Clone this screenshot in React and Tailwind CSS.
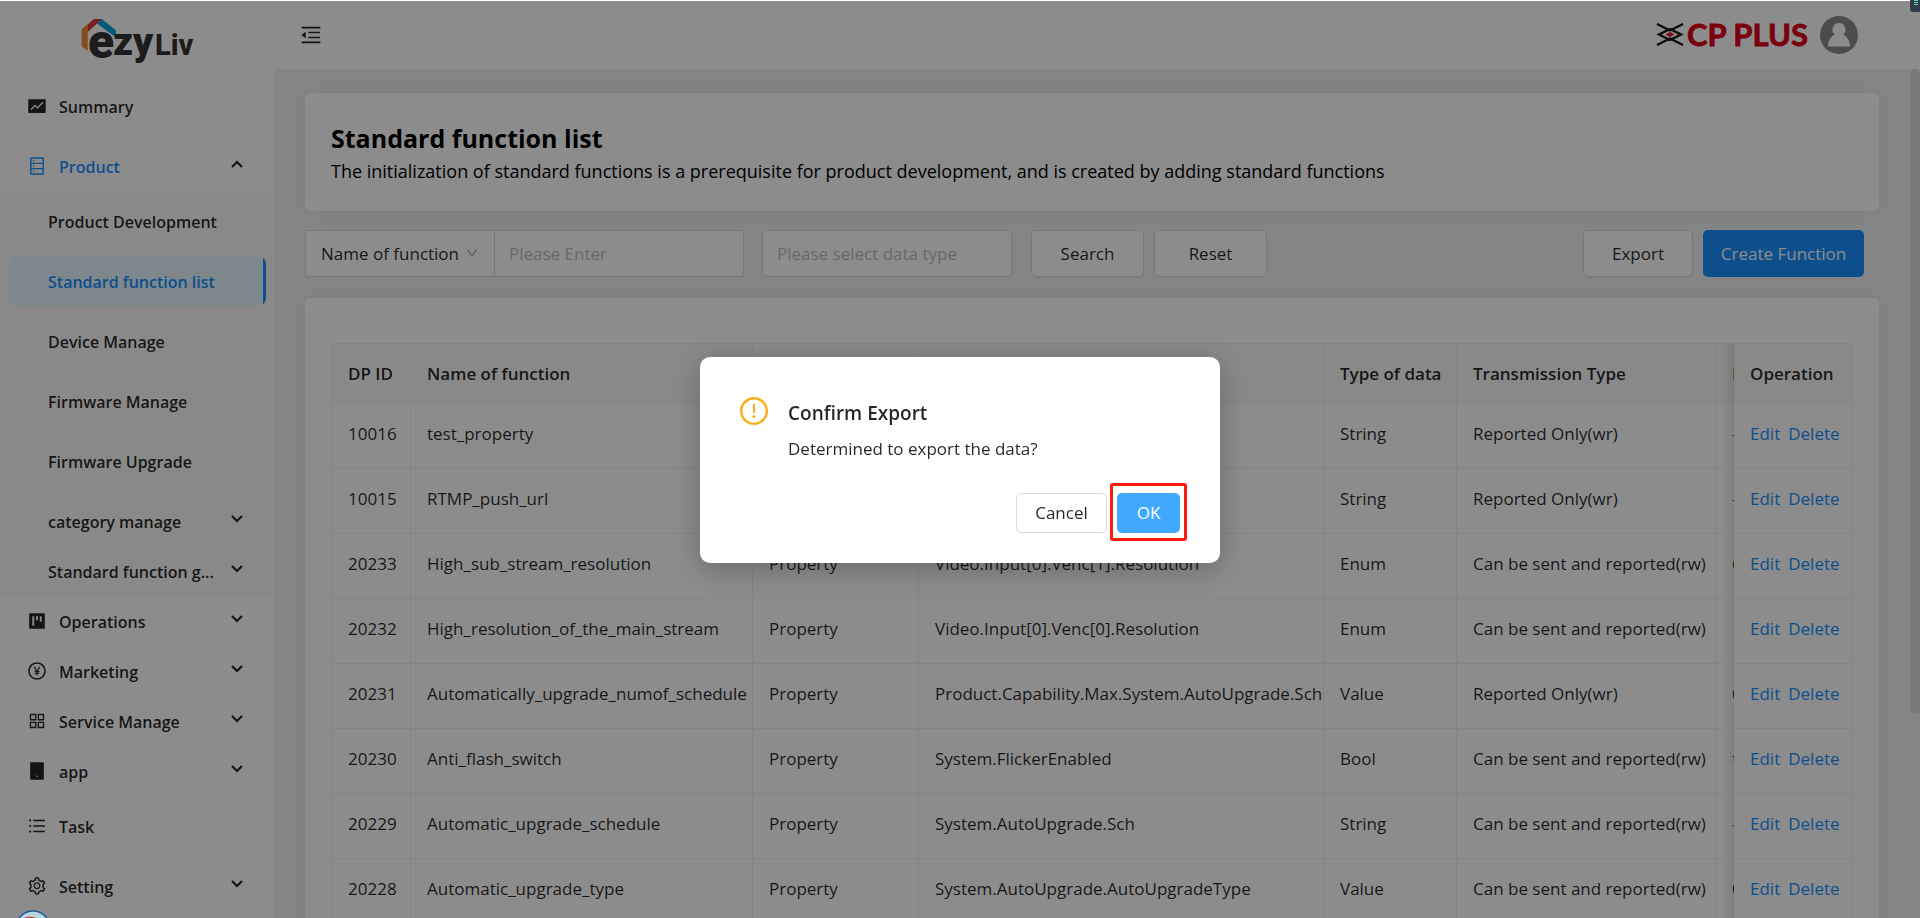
import {
  AiFillFund, AiOutlineDatabase, AiFillProject, AiOutlinePayCircle, AiOutlineAppstore, AiFillTablet,
  AiOutlineUnorderedList, AiOutlineSetting, AiOutlineMenuFold, AiOutlineExclamationCircle, AiOutlineDown,
} from "react-icons/ai";

const productItems = [
  { label: "Product Development" },
  { label: "Standard function list", active: true },
  { label: "Device Manage" },
  { label: "Firmware Manage" },
  { label: "Firmware Upgrade" },
];

const productGroups = ["category manage", "Standard function g..."];

const groups = [
  { label: "Operations", Icon: AiFillProject },
  { label: "Marketing", Icon: AiOutlinePayCircle },
  { label: "Service Manage", Icon: AiOutlineAppstore },
  { label: "app", Icon: AiFillTablet },
];

const rows = [
  ["10016", "test_property", "Property", "test_property", "String", "Reported Only(wr)", "-"],
  ["10015", "RTMP_push_url", "Property", "RTMP_push_url", "String", "Reported Only(wr)", "-"],
  ["20233", "High_sub_stream_resolution", "Property", "Video.Input[0].Venc[1].Resolution", "Enum", "Can be sent and reported(rw)", "6"],
  ["20232", "High_resolution_of_the_main_stream", "Property", "Video.Input[0].Venc[0].Resolution", "Enum", "Can be sent and reported(rw)", "1"],
  ["20231", "Automatically_upgrade_numof_schedule", "Property", "Product.Capability.Max.System.AutoUpgrade.Sch", "Value", "Reported Only(wr)", "0"],
  ["20230", "Anti_flash_switch", "Property", "System.FlickerEnabled", "Bool", "Can be sent and reported(rw)", "f"],
  ["20229", "Automatic_upgrade_schedule", "Property", "System.AutoUpgrade.Sch", "String", "Can be sent and reported(rw)", "-"],
  ["20228", "Automatic_upgrade_type", "Property", "System.AutoUpgrade.AutoUpgradeType", "Value", "Can be sent and reported(rw)", "0"],
];

function Chevron({ up }) {
  return (
    <svg viewBox="0 0 12 8" className="mb-1 h-2 w-3 shrink-0" fill="none" stroke="currentColor" strokeWidth="2.2">
      <path d={up ? "M1 7 6 2l5 5" : "M1 1l5 5 5-5"} />
    </svg>
  );
}

function MenuGroup({ label, Icon, open, nested }) {
  return (
    <button
      type="button"
      aria-expanded={!!open}
      className={`flex h-[50px] w-full items-center pr-[31px] text-left ${nested ? "pl-12" : "pl-[27px]"} ${open ? "text-[#1890ff]" : ""}`}
    >
      {Icon && <Icon className="mr-3 size-5 shrink-0" />}
      <span className="grow pt-0.5 whitespace-nowrap">{label}</span>
      <span className="text-black/85"><Chevron up={open} /></span>
    </button>
  );
}

function EzyLogo() {
  return (
    <svg viewBox="0 0 120 52" className="h-[52px] w-[120px]" role="img" aria-label="ezyLiv">
      <path d="M4.700 12l6-5v27l-6-4.500z" fill="#f08a33" />
      <path d="M10.700 7.500 17 2h8L10.700 15z" fill="#e0353d" />
      <path d="M20 6.500 25 2l14 11.500v7z" fill="#08a5dd" />
      <g fill="#333" fontFamily="Roboto, 'Open Sans', sans-serif" fontWeight="900">
        <text x="11" y="41" fontSize="48">e</text>
        <text x="36" y="38" fontSize="39">zy</text>
        <text x="78" y="38" fontSize="29" fontWeight="800">Liv</text>
      </g>
    </svg>
  );
}

function CpPlusLogo() {
  return (
    <svg viewBox="0 0 154 34" className="h-[34px] w-[154px]" role="img" aria-label="CP PLUS">
      <g fill="none" stroke="#111" strokeWidth="2.4">
        <path d="M1 6l13 6.500 13-6.500M1 27l13-6.500 13 6.500" />
        <path d="M3 16.500 14 11l11 5.500L14 22z" />
      </g>
      <path d="M9.500 16.500 14 14l4.500 2.500L14 19z" fill="#e0142d" />
      <text x="31" y="28" fill="#e0001b" stroke="#e0001b" strokeWidth="0.8" fontSize="31" fontWeight="700" fontFamily="Lato, Roboto, sans-serif">CP PLUS</text>
    </svg>
  );
}

const control = "h-[47px] border border-[#d9d9d9] bg-white";
const button = `${control} rounded-[5px] shadow-[0_2px_0_rgba(0,0,0,0.02)]`;
const th = "h-[60px] border-r border-b border-[#f0f0f0] bg-[#fafafa] px-4 text-left font-semibold whitespace-nowrap";
const td = "h-[65px] border-r border-b border-[#f0f0f0] bg-white px-4 pb-1 whitespace-nowrap";
const fixedCell = "sticky right-0 before:absolute before:inset-y-0 before:-left-3 before:w-3 before:bg-linear-to-l before:from-black/10 before:to-transparent";
const card = "rounded-[5px] bg-white shadow-[0_0_25px_rgba(0,0,0,0.06)]";

export default function App() {
  return (
    <div className="relative h-screen overflow-hidden bg-white font-['Open_Sans','Noto_Sans',sans-serif] text-[17px] leading-7 text-black/85">
      <div className="flex h-full">
        <aside className="w-[274px] shrink-0 overflow-hidden">
          <div className="flex h-[81px] justify-center pt-[17px]"><EzyLogo /></div>
          <nav aria-label="Main" className="text-base font-semibold">
            <a href="#summary" className="mb-2.5 flex h-[50px] items-center pl-[27px]">
              <AiFillFund className="mr-3 size-5" /><span className="pt-0.5">Summary</span>
            </a>
            <MenuGroup label="Product" Icon={AiOutlineDatabase} open />
            <div className="bg-[#fafafa] pt-[5px]">
              {productItems.map(({ label, active }) => (
                <a
                  key={label}
                  href={`#${label}`}
                  className={`mx-2 mb-2.5 flex h-[50px] items-center rounded-lg pt-0.5 pl-10 ${active ? "relative overflow-hidden bg-[#e6f7ff] text-[#1890ff] after:absolute after:inset-y-0 after:right-0 after:w-[3px] after:bg-[#1890ff]" : ""}`}
                >
                  {label}
                </a>
              ))}
              {productGroups.map((label) => <MenuGroup key={label} label={label} nested />)}
            </div>
            {groups.map((group) => <MenuGroup key={group.label} {...group} />)}
            <a href="#task" className="mt-[5px] mb-2.5 flex h-[50px] items-center pl-[27px]">
              <AiOutlineUnorderedList className="mr-3 size-5" /><span className="pt-0.5">Task</span>
            </a>
            <MenuGroup label="Setting" Icon={AiOutlineSetting} />
          </nav>
        </aside>

        <div className="flex min-w-0 grow flex-col">
          <header className="flex h-[69px] shrink-0 items-center justify-between pr-[62px] pl-[25px]">
            <button type="button" aria-label="Collapse menu"><AiOutlineMenuFold className="size-6" /></button>
            <div className="flex items-center gap-2.5">
              <CpPlusLogo />
              <svg viewBox="0 0 38 38" className="size-[38px]" role="img" aria-label="Account">
                <circle cx="19" cy="19" r="19" fill="#8a8a8a" />
                <path d="M19 7a6.500 6.500 0 0 1 4 11.600C27 20 30 25 30 30.500H8C8 25 11 20 15 18.600A6.500 6.500 0 0 1 19 7z" fill="#fff" />
              </svg>
            </div>
          </header>

          <div className="flex min-h-0 grow bg-[#f0f2f5]">
            <main className="min-w-0 grow overflow-hidden pt-6 pr-[31px] pl-[31px]">
              <section className={`${card} h-[118px] px-[26px] pt-[27px] text-black`}>
                <h1 className="text-[25px] leading-9 font-bold">Standard function list</h1>
                <p className="text-lg leading-[30px]">
                  The initialization of standard functions is a prerequisite for product development, and is created by adding standard functions
                </p>
              </section>

              <form className="mt-[19px] mb-[21px] flex pr-[15px] whitespace-nowrap" onSubmit={(e) => e.preventDefault()}>
                <div className="relative">
                  <select aria-label="Search field" className={`${control} w-[190px] appearance-none rounded-l-[3px] bg-[#fafafa] pl-[15px]`}>
                    <option>Name of function</option>
                  </select>
                  <AiOutlineDown className="pointer-events-none absolute top-4 right-4 size-[14px] text-black/40" />
                </div>
                <input aria-label="Name of function" placeholder="Please Enter" className={`${control} -ml-px w-[250px] rounded-r-[3px] px-3.5 placeholder:text-[#bfbfbf]`} />
                <select aria-label="Data type" className={`${control} ml-[18px] w-[250px] appearance-none rounded-[3px] px-3.5 text-[#bfbfbf]`}>
                  <option>Please select data type</option>
                </select>
                <button type="submit" className={`${button} ml-[19px] w-[113px]`}>Search</button>
                <button type="reset" className={`${button} mr-auto ml-2.5 w-[113px]`}>Reset</button>
                <button type="button" className={`${button} w-[110px]`}>Export</button>
                <button type="button" className="ml-2.5 h-[47px] w-[161px] rounded-[5px] bg-[#1890ff] text-white">Create Function</button>
              </form>

              <section className={`${card} px-[26px] pt-[45px] pb-6`}>
                <div className="overflow-hidden border-t border-l border-[#f0f0f0]">
                  <table className="w-full min-w-[1640px] table-fixed border-separate border-spacing-0">
                    <colgroup>
                      <col className="w-[79px]" /><col className="w-[342px]" /><col className="w-[166px]" /><col className="w-[405px]" />
                      <col className="w-[133px]" /><col className="w-[259px]" /><col /><col className="w-[119px]" />
                    </colgroup>
                    <thead>
                      <tr>
                        {["DP ID", "Name of function", "Function type", "Identifier", "Type of data", "Transmission Type", "D"].map((h) => (
                          <th key={h} className={th}>{h}</th>
                        ))}
                        <th className={`${th} ${fixedCell}`}>Operation</th>
                      </tr>
                    </thead>
                    <tbody>
                      {rows.map((row) => (
                        <tr key={row[0]}>
                          {row.map((cell, i) => <td key={i} className={td}>{cell}</td>)}
                          <td className={`${td} ${fixedCell}`}>
                            <span className="flex gap-2 text-[#1890ff]"><a href="#edit">Edit</a><a href="#delete">Delete</a></span>
                          </td>
                        </tr>
                      ))}
                    </tbody>
                  </table>
                </div>
              </section>
            </main>
            <div className="h-[76%] w-2.5 shrink-0 rounded-[5px] bg-[#dcdddf]" />
          </div>
        </div>
      </div>

      <div className="absolute inset-x-0 top-px bottom-0 bg-black/45" />
      <div className="absolute inset-x-0 top-[357px] flex justify-center">
        <div role="dialog" aria-modal="true" aria-labelledby="confirm-title" className="w-[520px] rounded-[10px] bg-white pt-[38px] pr-10 pb-[30px] pl-[38px] shadow-[0_6px_30px_rgba(0,0,0,0.25)]">
          <div className="flex gap-[18px]">
            <AiOutlineExclamationCircle className="size-8 shrink-0 text-[#faad14]" />
            <div>
              <h2 id="confirm-title" className="text-[19px] leading-9 font-semibold">Confirm Export</h2>
              <p className="mt-1 leading-7">Determined to export the data?</p>
            </div>
          </div>
          <div className="mt-[30px] flex justify-end gap-2.5">
            <button type="button" className="h-10 w-[91px] rounded-[5px] border border-[#d9d9d9]">Cancel</button>
            <span className="relative">
              <button type="button" className="h-10 w-[63px] rounded-[5px] bg-[#40a9ff] text-white">OK</button>
              <span className="pointer-events-none absolute -inset-x-[7px] -top-2.5 -bottom-2 rounded-[3px] border-[3px] border-[#ff1a0d]" />
            </span>
          </div>
        </div>
      </div>

      <svg viewBox="0 0 10 12" className="absolute top-0 right-0 h-3 w-2.5">
        <path d="M0 0h10v12H3a3 3 0 0 1-3-3z" fill="#343b4a" />
        <path d="M4 0.500h4M4 2.500h4M4 4.500h4" stroke="#4fe0b8" />
      </svg>
      <svg viewBox="0 0 36 8" className="absolute bottom-0 left-[15px] h-2 w-9">
        <circle cx="18" cy="18" r="17" fill="#bcd3e3" stroke="#1d5c96" strokeWidth="1.500" />
        <path d="M9 8q6-3 12 0z" fill="#c6412f" />
      </svg>
    </div>
  );
}
